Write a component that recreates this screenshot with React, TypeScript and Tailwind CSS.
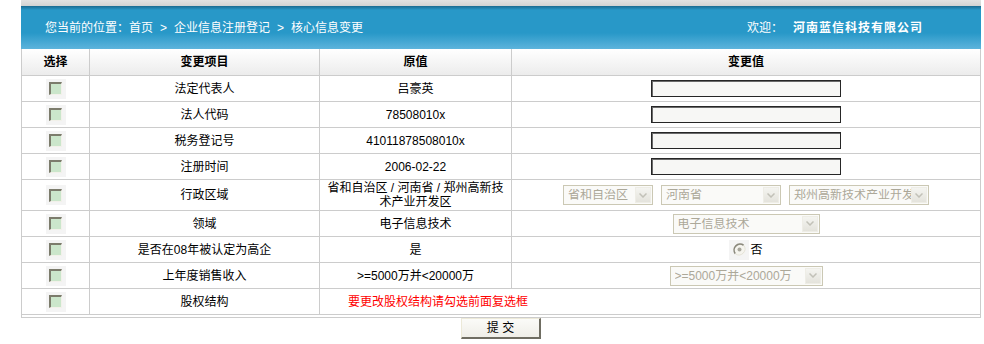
import React from 'react';

const font = "font-['Liberation_Sans','Noto_Sans_CJK_SC',sans-serif]";

function CheckBox() {
  return (
    <div className="w-[20px] h-[20px] bg-[#f4f4f4] flex items-center justify-center">
      <div className="w-[13px] h-[13px] border-t-2 border-l-2 border-r border-b border-t-[#7c7c6c] border-l-[#7c7c6c] border-r-[#f2f1ea] border-b-[#f2f1ea] bg-[#cbe6cb]" />
    </div>
  );
}

function TextBox() {
  return (
    <div className="w-[190px] h-[17px] border border-[#262626] shadow-[inset_1px_1px_0_#6a6a6a] bg-[#f7f7f5]" />
  );
}

function Sel({ text, width }: { text: string; width: string }) {
  return (
    <div
      className={`${width} h-[20px] border border-[#cbc8b4] bg-[#fafaf8] flex items-center justify-between pl-[4px] pr-[1px]`}
    >
      <span className="text-[12px] leading-none text-[#aca899] whitespace-nowrap overflow-hidden">{text}</span>
      <div className="w-[16px] h-[16px] shrink-0 bg-[linear-gradient(to_bottom,#f4f4f0,#e4e3dc)] border border-[#eeede6] flex items-center justify-center">
        <svg width="8" height="5" viewBox="0 0 8 5">
          <polyline points="0.5,0.5 4,4 7.5,0.5" fill="none" stroke="#c2c1b8" strokeWidth="1.5" />
        </svg>
      </div>
    </div>
  );
}

function Radio() {
  return (
    <div className="flex items-center">
      <div className="w-[20px] h-[20px] bg-[#f4f4f4] flex items-center justify-center">
        <svg width="13" height="13" viewBox="0 0 13 13">
          <circle cx="6.5" cy="6.5" r="6" fill="#f5f4ee" />
          <path d="M2.3 10.7 A6 6 0 0 1 10.7 2.3" fill="none" stroke="#8a887c" strokeWidth="1.6" />
          <path d="M10.7 2.3 A6 6 0 0 1 2.3 10.7" fill="none" stroke="#e4e2d8" strokeWidth="1" />
          <circle cx="6.5" cy="6.5" r="2" fill="#a8a69c" />
        </svg>
      </div>
      <span className="text-[12px] text-black ml-[1px]">否</span>
    </div>
  );
}

type Row = { item: string; orig: React.ReactNode; change: React.ReactNode; h?: string };

const rows: Row[] = [
  { item: '法定代表人', orig: '吕豪英', change: <TextBox /> },
  { item: '法人代码', orig: '78508010x', change: <TextBox /> },
  { item: '税务登记号', orig: '41011878508010x', change: <TextBox /> },
  { item: '注册时间', orig: '2006-02-22', change: <TextBox /> },
  {
    item: '行政区域',
    orig: (
      <span className="leading-[14px]">
        省和自治区 / 河南省 / 郑州高新技
        <br />
        术产业开发区
      </span>
    ),
    change: (
      <div className="flex gap-[8px]">
        <Sel text="省和自治区" width="w-[90px]" />
        <Sel text="河南省" width="w-[120px]" />
        <Sel text="郑州高新技术产业开发区" width="w-[140px]" />
      </div>
    ),
    h: 'h-[31px]',
  },
  { item: '领域', orig: '电子信息技术', change: <Sel text="电子信息技术" width="w-[147px]" /> },
  { item: '是否在08年被认定为高企', orig: '是', change: <Radio /> },
  {
    item: '上年度销售收入',
    orig: '>=5000万并<20000万',
    change: <Sel text=">=5000万并<20000万" width="w-[153px]" />,
  },
];

const cell = 'flex items-center justify-center border-r border-[#cccccc] text-center';

export default function App() {
  return (
    <div className={`w-[984px] h-[344px] bg-white ${font} text-[12px] text-black`}>
      <div className="ml-[21px] w-[960px]">
        {/* top strip */}
        <div className="h-[6px] bg-[linear-gradient(to_bottom,#e2e2e2,#d2d2d2)]" />
        {/* breadcrumb bar */}
        <div className="h-[43px] bg-[linear-gradient(to_bottom,#1a6a90,#2898c8_4px,#2898c8_27px,#5db4dc)] flex items-center justify-between pl-[24px] pr-[58px] text-white text-[12px]">
          <div className="flex items-center whitespace-nowrap">
            <span>您当前的位置：首页</span>
            <span className="mx-[7px]">&gt;</span>
            <span>企业信息注册登记</span>
            <span className="mx-[7px]">&gt;</span>
            <span>核心信息变更</span>
          </div>
          <div className="flex items-center whitespace-nowrap">
            <span className="mr-[10px]">欢迎：</span>
            <span className="font-bold tracking-[1px]">河南蓝信科技有限公司</span>
          </div>
        </div>

        {/* table */}
        <div className="border-l border-r border-b border-[#cccccc]">
          <div className="grid grid-cols-[68px_230px_192px_1fr] h-[27px] border-b border-[#cccccc] bg-[linear-gradient(to_bottom,#ffffff,#ececec)] font-bold">
            <div className={cell}>选择</div>
            <div className={cell}>变更项目</div>
            <div className={cell}>原值</div>
            <div className="flex items-center justify-center">变更值</div>
          </div>
          {rows.map((r, i) => (
            <div
              key={i}
              className={`grid grid-cols-[68px_230px_192px_1fr] ${r.h ?? 'h-[26px]'} border-b border-[#cccccc]`}
            >
              <div className={cell}>
                <CheckBox />
              </div>
              <div className={cell}>{r.item}</div>
              <div className={cell}>{r.orig}</div>
              <div className="flex items-center justify-center">{r.change}</div>
            </div>
          ))}
          <div className="grid grid-cols-[68px_230px_1fr] h-[26px] border-b border-[#cccccc]">
            <div className={cell}>
              <CheckBox />
            </div>
            <div className={cell}>股权结构</div>
            <div className="flex items-center pl-[28px] text-[#ff0000]">要更改股权结构请勾选前面复选框</div>
          </div>
          <div className="h-[2px]" />
        </div>

        {/* submit */}
        <div className="flex justify-center">
          <button
            type="button"
            className="w-[80px] h-[21px] bg-[linear-gradient(to_bottom,#fbfbf8,#efeee8)] border-t border-l border-b-2 border-r-2 border-t-[#ece9d8] border-l-[#ece9d8] border-b-[#6f6d62] border-r-[#6f6d62] text-[12px] text-black leading-none"
          >
            提&nbsp;交
          </button>
        </div>
      </div>
    </div>
  );
}
